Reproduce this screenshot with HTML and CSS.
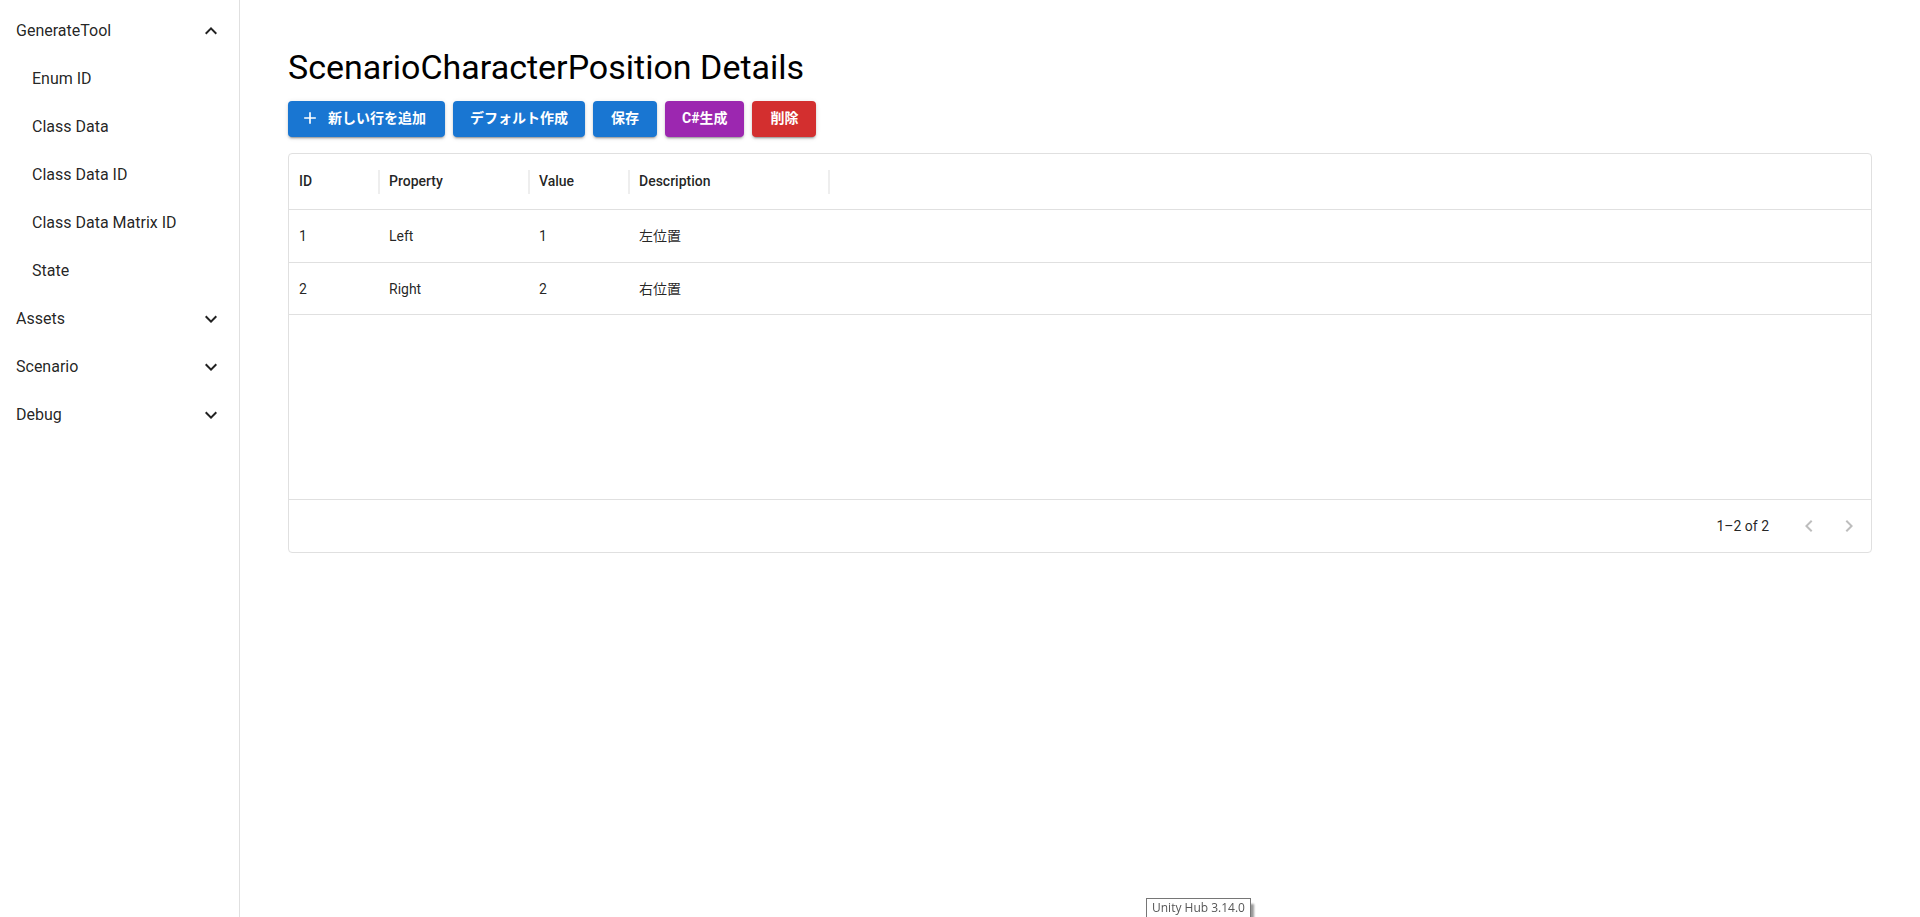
FILE: index.html
```html
<!DOCTYPE html>
<html lang="ja">
<head>
<meta charset="utf-8">
<meta name="viewport" content="width=device-width, initial-scale=1">
<title>ScenarioCharacterPosition Details</title>
<link rel="stylesheet" href="styles.css">
</head>
<body>
<div class="app">
  <nav class="sidebar" aria-label="Main">
    <button type="button" class="nav-group" aria-expanded="true">GenerateTool
      <svg class="icon" viewBox="0 0 24 24" aria-hidden="true"><path d="m12 8-6 6 1.41 1.41L12 10.83l4.59 4.58L18 14z"/></svg>
    </button>
    <a class="nav-link" href="#enum-id">Enum ID</a>
    <a class="nav-link" href="#class-data">Class Data</a>
    <a class="nav-link" href="#class-data-id">Class Data ID</a>
    <a class="nav-link" href="#class-data-matrix-id">Class Data Matrix ID</a>
    <a class="nav-link" href="#state">State</a>
    <button type="button" class="nav-group" aria-expanded="false">Assets
      <svg class="icon" viewBox="0 0 24 24" aria-hidden="true"><path d="M16.59 8.59 12 13.17 7.41 8.59 6 10l6 6 6-6z"/></svg>
    </button>
    <button type="button" class="nav-group" aria-expanded="false">Scenario
      <svg class="icon" viewBox="0 0 24 24" aria-hidden="true"><path d="M16.59 8.59 12 13.17 7.41 8.59 6 10l6 6 6-6z"/></svg>
    </button>
    <button type="button" class="nav-group" aria-expanded="false">Debug
      <svg class="icon" viewBox="0 0 24 24" aria-hidden="true"><path d="M16.59 8.59 12 13.17 7.41 8.59 6 10l6 6 6-6z"/></svg>
    </button>
  </nav>
  <main class="content">
    <h1 class="title">ScenarioCharacterPosition Details</h1>
    <div class="toolbar">
      <button type="button" class="btn btn-icon"><svg class="icon icon-small" viewBox="0 0 24 24" aria-hidden="true"><path d="M19 13h-6v6h-2v-6H5v-2h6V5h2v6h6z"/></svg>新しい行を追加</button>
      <button type="button" class="btn">デフォルト作成</button>
      <button type="button" class="btn">保存</button>
      <button type="button" class="btn btn-secondary">C#生成</button>
      <button type="button" class="btn btn-error">削除</button>
    </div>
    <section class="grid">
      <div class="grid-body">
        <table class="table">
          <colgroup><col class="col-id"><col class="col-property"><col class="col-value"><col class="col-description"><col></colgroup>
          <thead>
            <tr><th scope="col"><span class="head">ID</span></th><th scope="col"><span class="head">Property</span></th><th scope="col"><span class="head">Value</span></th><th scope="col"><span class="head">Description</span></th><td></td></tr>
          </thead>
          <tbody>
            <tr><td>1</td><td>Left</td><td>1</td><td>左位置</td><td></td></tr>
            <tr><td>2</td><td>Right</td><td>2</td><td>右位置</td><td></td></tr>
          </tbody>
        </table>
      </div>
      <div class="grid-footer">
        <span>1–2 of 2</span>
        <div class="pager">
          <button type="button" class="page-btn" aria-label="Previous page" disabled><svg class="icon" viewBox="0 0 24 24" aria-hidden="true"><path d="M15.41 16.59 10.83 12l4.58-4.59L14 6l-6 6 6 6z"/></svg></button>
          <button type="button" class="page-btn" aria-label="Next page" disabled><svg class="icon" viewBox="0 0 24 24" aria-hidden="true"><path d="M8.59 16.59 13.17 12 8.59 7.41 10 6l6 6-6 6z"/></svg></button>
        </div>
      </div>
    </section>
  </main>
</div>
<div class="tooltip" role="tooltip">Unity Hub 3.14.0</div>
</body>
</html>
```
FILE: styles.css
```css
* {
  box-sizing: border-box;
}

body {
  margin: 0;
  background: #fff;
  color: rgba(0, 0, 0, 0.87);
  font-family: Roboto, "Noto Sans CJK JP", sans-serif;
  font-size: 16px;
  line-height: 24px;
}

button {
  border: 0;
  background: none;
  color: inherit;
  font: inherit;
  cursor: pointer;
}

.app {
  display: flex;
  min-height: 100vh;
}

.icon {
  display: block;
  flex: none;
  width: 24px;
  height: 24px;
  fill: currentColor;
}

.icon-small {
  width: 20px;
  height: 20px;
}

.sidebar {
  display: flex;
  flex: none;
  flex-direction: column;
  width: 240px;
  padding: 7px 0;
  border-right: 1px solid #e0e0e0;
}

.nav-group,
.nav-link {
  display: flex;
  align-items: center;
  justify-content: space-between;
  padding: 12px 16px;
  color: inherit;
  text-decoration: none;
}

.nav-link {
  padding-left: 32px;
}

.content {
  flex: 1;
  min-width: 0;
  padding: 47px 48px;
}

.title {
  margin: 0 0 14px;
  color: #000;
  font-size: 34px;
  font-weight: 400;
  line-height: 40px;
}

.toolbar {
  display: flex;
  flex-wrap: wrap;
  gap: 8px;
  margin-bottom: 16px;
}

.btn {
  display: flex;
  align-items: center;
  justify-content: center;
  gap: 8px;
  min-width: 64px;
  padding: 5px 17px 7px;
  border-radius: 4px;
  background: #1976d2;
  box-shadow: 0 3px 1px -2px rgba(0, 0, 0, 0.2), 0 2px 2px 0 rgba(0, 0, 0, 0.14), 0 1px 5px 0 rgba(0, 0, 0, 0.12);
  color: #fff;
  font-size: 14px;
  font-weight: 700;
  line-height: 24px;
}

.btn-icon {
  padding-right: 19px;
  padding-left: 12px;
}

.btn-secondary {
  background: #9c27b0;
}

.btn-error {
  background: #d32f2f;
}

.grid {
  display: flex;
  flex-direction: column;
  min-height: 400px;
  border: 1px solid #e0e0e0;
  border-radius: 4px;
  font-size: 14px;
  line-height: 20px;
}

.grid-body {
  flex: 1;
}

.table {
  width: 100%;
  border-collapse: separate;
  border-spacing: 0;
  table-layout: fixed;
}

.col-id {
  width: 91px;
}

.col-property {
  width: 150px;
}

.col-value {
  width: 100px;
}

.col-description {
  width: 200px;
}

.table th,
.table td {
  height: 52px;
  padding: 0 9px;
  border-bottom: 1px solid #e0e0e0;
  text-align: left;
}

.table th:first-child,
.table td:first-child {
  padding-left: 10px;
}

.table thead th,
.table thead td {
  height: 56px;
}

.table tbody tr:first-child td {
  height: 53px;
}

.table th {
  padding-right: 0;
  font-weight: 500;
}

.head {
  display: block;
  padding: 1px 0 3px;
  border-right: 2px solid #eee;
}

.grid-footer {
  display: flex;
  align-items: center;
  justify-content: flex-end;
  gap: 20px;
  min-height: 53px;
  padding: 0 2px;
  border-top: 1px solid #e0e0e0;
}

.pager {
  display: flex;
}

.page-btn {
  padding: 8px;
  color: rgba(0, 0, 0, 0.26);
}

.tooltip {
  position: fixed;
  bottom: 0;
  left: 1146px;
  height: 19px;
  padding: 0 5px;
  border: 1px solid #767676;
  border-bottom: 0;
  background: #fff;
  box-shadow: 3px 6px 2px rgba(0, 0, 0, 0.4);
  color: #575757;
  font-family: "Open Sans", sans-serif;
  font-size: 12px;
  line-height: 18px;
}
```
